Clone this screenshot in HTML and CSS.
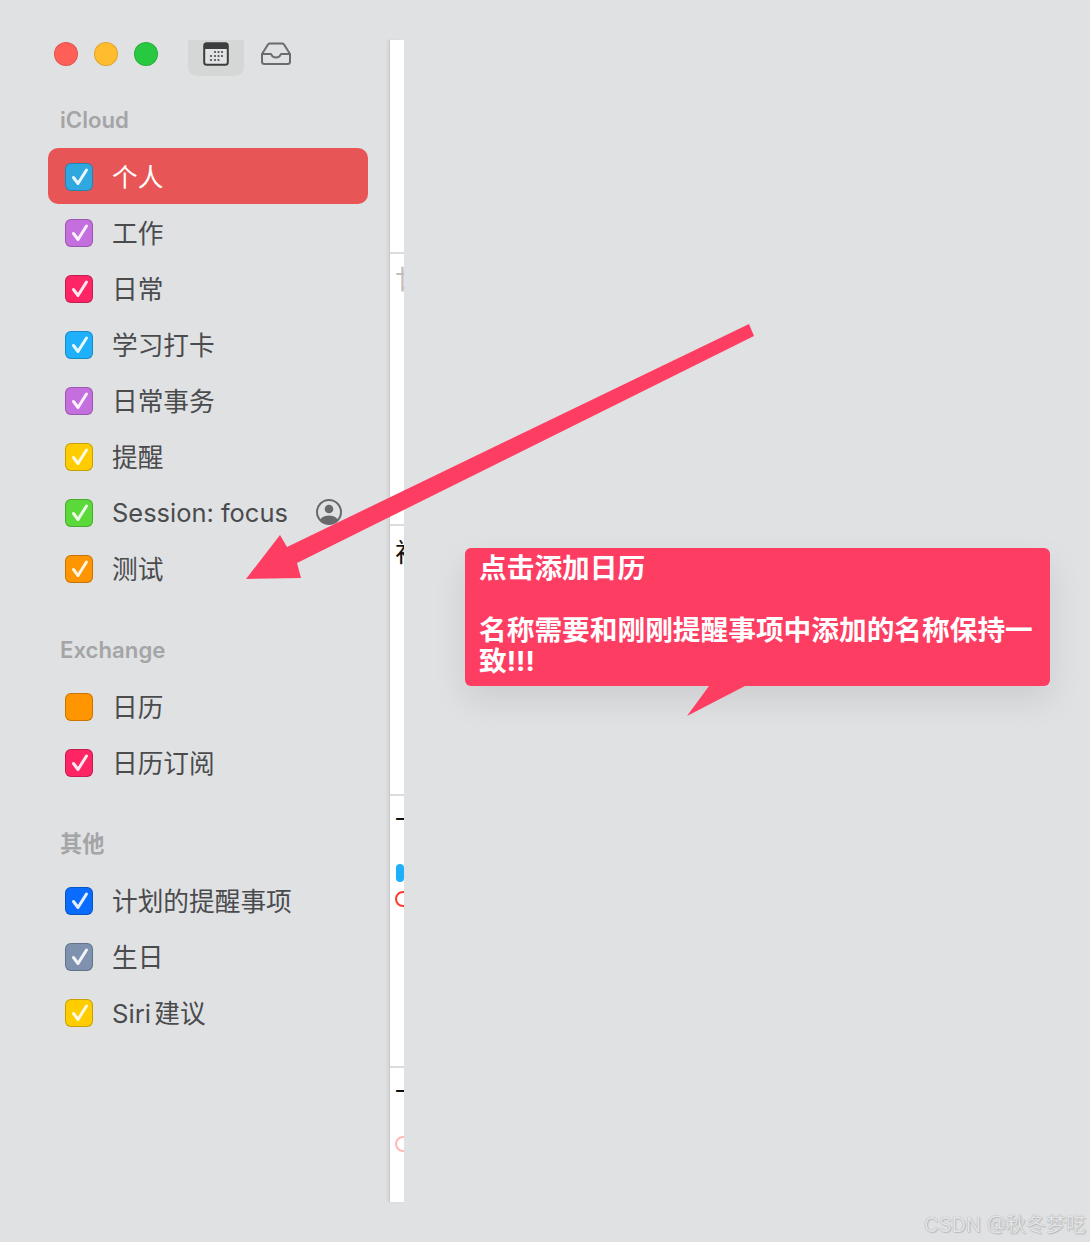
FILE: index.html
```html
<!DOCTYPE html>
<html lang="zh">
<head>
<meta charset="utf-8">
<title>日历</title>
<link rel="stylesheet" href="styles.css">
</head>
<body>
<svg class="defs" width="0" height="0" aria-hidden="true">
  <symbol id="tick" viewBox="0 0 28 28"><path d="M8.500 14.500l4.500 6L21.500 7" fill="none" stroke="currentColor" stroke-width="3" stroke-linecap="round" stroke-linejoin="round"/></symbol>
</svg>
<div class="app">
  <aside class="sidebar">
    <div class="toolbar">
      <div class="lights">
        <span class="light red"></span>
        <span class="light yellow"></span>
        <span class="light green"></span>
      </div>
      <div class="tool active">
        <svg width="26" height="24" viewBox="0 0 26 24">
          <rect x="1.200" y="1.200" width="23.600" height="21.600" rx="2.500" fill="#e2e3e4" stroke="#3c3d3f" stroke-width="2"/>
          <path d="M1 3.500a2.500 2.500 0 0 1 2.500-2.500h19a2.500 2.500 0 0 1 2.500 2.500V7H1z" fill="#3c3d3f"/>
          <g fill="#4a4b4d">
            <circle cx="12" cy="10" r="1.100"/><circle cx="15.500" cy="10" r="1.100"/><circle cx="19" cy="10" r="1.100"/>
            <circle cx="8" cy="14" r="1.100"/><circle cx="12" cy="14" r="1.100"/><circle cx="15.500" cy="14" r="1.100"/><circle cx="19" cy="14" r="1.100"/>
            <circle cx="8" cy="18" r="1.100"/><circle cx="12" cy="18" r="1.100"/><circle cx="15.500" cy="18" r="1.100"/>
          </g>
        </svg>
      </div>
      <div class="tool inbox">
        <svg width="30" height="23" viewBox="0 0 30 23">
          <path d="M1 12L7 2.500a2 2 0 0 1 1.600-1h12.800a2 2 0 0 1 1.600 1L29 12v7.500a2.500 2.500 0 0 1-2.500 2.500h-23A2.500 2.500 0 0 1 1 19.500z M1 12h8.500c.5 0 .8.300 1 .800.500 1.700 2.200 2.700 4.500 2.700s4-1 4.500-2.700c.2-.5.5-.8 1-.8H29" fill="none" stroke="#6a6b6d" stroke-width="2" stroke-linejoin="round"/>
        </svg>
      </div>
    </div>

    <section class="group first">
      <h2 class="group-title">iCloud</h2>
      <ul class="rows">
        <li class="row selected"><span class="box sky"><svg class="tick"><use href="#tick"/></svg></span><span class="name">个人</span></li>
        <li class="row"><span class="box purple"><svg class="tick"><use href="#tick"/></svg></span><span class="name">工作</span></li>
        <li class="row"><span class="box pink"><svg class="tick"><use href="#tick"/></svg></span><span class="name">日常</span></li>
        <li class="row"><span class="box blue"><svg class="tick"><use href="#tick"/></svg></span><span class="name">学习打卡</span></li>
        <li class="row"><span class="box purple"><svg class="tick"><use href="#tick"/></svg></span><span class="name">日常事务</span></li>
        <li class="row"><span class="box yellow"><svg class="tick"><use href="#tick"/></svg></span><span class="name">提醒</span></li>
        <li class="row"><span class="box lime"><svg class="tick"><use href="#tick"/></svg></span><span class="name latin">Session: focus</span>
          <svg class="shared" width="26" height="26" viewBox="0 0 26 26">
            <defs><clipPath id="round"><circle cx="13" cy="13" r="11.500"/></clipPath></defs>
            <circle cx="13" cy="13" r="12" fill="none" stroke="#68696b" stroke-width="2"/>
            <circle cx="13" cy="10" r="4.300" fill="#68696b"/>
            <path d="M3 26c0-6.500 4-9.500 10-9.500s10 3 10 9.500z" fill="#68696b" clip-path="url(#round)"/>
          </svg>
        </li>
        <li class="row"><span class="box orange"><svg class="tick"><use href="#tick"/></svg></span><span class="name">测试</span></li>
      </ul>
    </section>

    <section class="group">
      <h2 class="group-title">Exchange</h2>
      <ul class="rows">
        <li class="row"><span class="box orange"></span><span class="name">日历</span></li>
        <li class="row"><span class="box pink"><svg class="tick"><use href="#tick"/></svg></span><span class="name">日历订阅</span></li>
      </ul>
    </section>

    <section class="group">
      <h2 class="group-title">其他</h2>
      <ul class="rows">
        <li class="row"><span class="box royal"><svg class="tick"><use href="#tick"/></svg></span><span class="name">计划的提醒事项</span></li>
        <li class="row"><span class="box slate"><svg class="tick"><use href="#tick"/></svg></span><span class="name">生日</span></li>
        <li class="row"><span class="box yellow"><svg class="tick"><use href="#tick"/></svg></span><span class="name tight">Siri 建议</span></li>
      </ul>
    </section>
  </aside>

  <main class="strip">
    <div class="cell head"></div>
    <div class="cell second"><span class="day muted">廿</span></div>
    <div class="cell third"><span class="day">初</span></div>
    <div class="cell">
      <span class="day">一</span>
      <span class="pill"></span>
      <span class="ring"></span>
    </div>
    <div class="cell last">
      <span class="day">一</span>
      <span class="ring pale"></span>
    </div>
  </main>
</div>

<svg class="arrow" width="1090" height="1242" viewBox="0 0 1090 1242" aria-hidden="true">
  <polygon fill="#fe3d63" points="749,324 754,336 297,563 301,578 246,579 280,535 287,547"/>
</svg>

<div class="callout">
  <p class="callout-line">点击添加日历</p>
  <p class="callout-line gap">名称需要和刚刚提醒事项中添加的名称保持一致!!!</p>
  <svg class="tail" width="62" height="32" viewBox="0 0 62 32" aria-hidden="true">
    <polygon fill="#fe3d63" points="22,0 58,0 0,30"/>
  </svg>
</div>

<div class="watermark">CSDN @秋冬梦呓</div>
</body>
</html>
```
FILE: styles.css
```css
* { box-sizing: border-box; }
html, body { margin: 0; padding: 0; }
body {
  position: relative;
  width: 1090px;
  height: 1242px;
  overflow: hidden;
  background: #e0e1e3;
  font-family: "Inter", "Noto Sans CJK SC", sans-serif;
  color: #4a4b4d;
}
.defs { position: absolute; }
.app { display: flex; align-items: flex-start; padding-top: 40px; }

.sidebar { width: 389px; flex: none; padding-left: 48px; }

.toolbar { display: flex; height: 36px; padding-left: 6px; }
.lights { display: flex; gap: 16px; padding-top: 2px; }
.light { width: 24px; height: 24px; border-radius: 50%; border: 1px solid rgba(0,0,0,.12); }
.light.red { background: #ff5f57; }
.light.yellow { background: #febc2e; }
.light.green { background: #28c840; }
.tool { display: flex; justify-content: center; padding-top: 2px; }
.tool svg { display: block; }
.tool.active {
  width: 56px;
  height: 36px;
  margin-left: 30px;
  background: #d5d6d6;
  border-radius: 0 0 9px 9px;
}
.tool.inbox { margin-left: 17px; }

.group { margin-top: 40px; }
.group.first { margin-top: 30px; }
.group-title {
  margin: 0 0 14px;
  padding-left: 12px;
  font-size: 22.200px;
  line-height: 28px;
  font-weight: 600;
  color: #a4a5a7;
}
.rows { margin: 0; padding: 0; list-style: none; width: 320px; }
.row {
  display: flex;
  align-items: center;
  gap: 19px;
  height: 56px;
  padding-left: 17px;
  border-radius: 10px;
  font-size: 25.700px;
}
.row.selected { background: #e75557; color: #fff; }
.name { white-space: nowrap; line-height: 26px; padding-top: 3px; }
.name.latin { font-size: 25.450px; padding-top: 2px; }
.name.tight { word-spacing: -4px; }
.shared { margin-left: 9px; }

.box {
  width: 28px;
  height: 28px;
  flex: none;
  margin-top: 2px;
  border-radius: 6px;
  box-shadow: inset 0 0 0 1px rgba(0,0,0,.22);
  color: rgba(255,255,255,.9);
}
.tick { display: block; width: 28px; height: 28px; }
.sky { background: #2fa8e0; }
.purple { background: #c56fdf; }
.pink { background: #ff2464; }
.blue { background: #1fb0fb; }
.yellow { background: #ffcc00; }
.lime { background: #5cd93a; }
.orange { background: #ff9500; }
.royal { background: #0a6cff; }
.slate { background: #7e92b0; }

.strip {
  width: 15px;
  height: 1162px;
  flex: none;
  border-left: 1px solid #c6c7c8;
  background: #fff;
  box-shadow: -2px 0 3px rgba(0,0,0,.05);
}
.cell {
  height: 272px;
  overflow: hidden;
  padding: 9px 0 0 5px;
  border-top: 2px solid #dcdcdc;
}
.cell.head { height: 212px; border-top: 0; padding: 0; }
.cell.second { padding-top: 11px; }
.cell.third { height: 270px; padding-top: 12px; }
.cell.last { height: 136px; }
.day {
  display: block;
  width: 26px;
  font-family: "Noto Sans CJK SC", sans-serif;
  font-size: 26px;
  line-height: 26px;
  color: #111;
}
.day.muted { color: #bdbdbd; }
.pill {
  display: block;
  width: 8px;
  height: 18px;
  margin: 33px 0 0 1px;
  border-radius: 4px;
  background: #1fb0fb;
}
.ring {
  display: block;
  width: 16px;
  height: 16px;
  margin-top: 9px;
  border: 2px solid #ff3b30;
  border-radius: 50%;
}
.ring.pale { margin-top: 33px; border-color: #ffb9b5; }

.arrow { position: absolute; left: 0; top: 0; pointer-events: none; }

.callout {
  position: absolute;
  left: 465px;
  top: 548px;
  width: 585px;
  height: 138px;
  padding: 5px 14px 0;
  border-radius: 6px;
  background: #fe3d63;
  color: #fff;
  box-shadow: 0 14px 34px rgba(0,0,0,.09);
  font-size: 27.700px;
  line-height: 31px;
  font-weight: 700;
}
.callout-line { margin: 0; }
.callout-line.gap { margin-top: 31px; }
.tail { position: absolute; left: 222px; top: 138px; display: block; }

.watermark {
  position: absolute;
  right: 4px;
  top: 1212px;
  font-size: 20px;
  line-height: 26px;
  white-space: nowrap;
  color: #e3e4e6;
  text-shadow: 0 0 1px #9a9b9d, 1px 1px 1px rgba(0,0,0,.15);
}
```
